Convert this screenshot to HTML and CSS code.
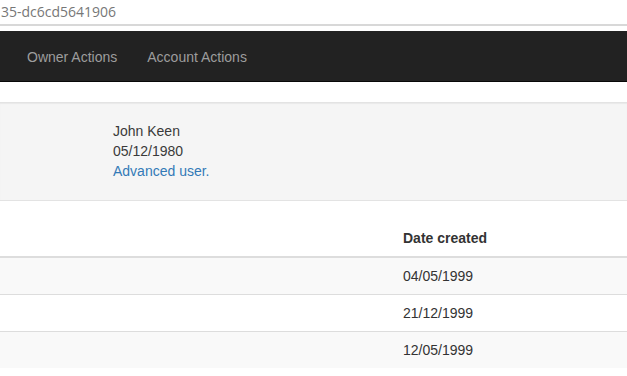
FILE: index.html
```html
<!DOCTYPE html>
<html>

<head>
    <title>Owner Details</title>
    <link rel="stylesheet" href="styles.css">
</head>

<body>
    <div class="address-bar">
        <span class="address-text">35-dc6cd5641906</span>
    </div>

    <nav class="navbar">
        <ul class="nav-links">
            <li><a href="#">Owner Actions</a></li>
            <li><a href="#">Account Actions</a></li>
        </ul>
    </nav>

    <div class="owner-well">
        <div class="owner-line">John Keen</div>
        <div class="owner-line">05/12/1980</div>
        <div class="owner-line owner-type">Advanced user.</div>
    </div>

    <table class="accounts-table">
        <thead>
            <tr>
                <th class="col-spacer"></th>
                <th>Date created</th>
            </tr>
        </thead>
        <tbody>
            <tr>
                <td></td>
                <td>04/05/1999</td>
            </tr>
            <tr>
                <td></td>
                <td>21/12/1999</td>
            </tr>
            <tr>
                <td></td>
                <td>12/05/1999</td>
            </tr>
        </tbody>
    </table>
</body>

</html>
```

FILE: styles.css
```css
body {
    margin: 0;
    padding: 0;
    background-color: #fff;
    color: #333;
    font-family: "Liberation Sans", Arial, sans-serif;
    font-size: 14px;
    line-height: 20px;
    overflow: hidden;
}

.address-bar {
    height: 24px;
    border-bottom: 2px solid #d8d8d8;
    margin-bottom: 5px;
    background-color: #fff;
}

.address-text {
    display: block;
    padding-left: 1px;
    font-family: "Open Sans", "DejaVu Sans", sans-serif;
    font-size: 14px;
    line-height: 24px;
    color: #777;
}

.navbar {
    height: 50px;
    background-color: #222;
    border-bottom: 1px solid #080808;
    margin-bottom: 20px;
}

.nav-links {
    display: flex;
    list-style: none;
    margin: 0;
    padding: 0 0 0 12px;
}

.nav-links a {
    display: block;
    padding: 16px 15px 14px;
    color: #9d9d9d;
    text-decoration: none;
}

.owner-well {
    background-color: #f5f5f5;
    border-top: 1px solid #e3e3e3;
    border-bottom: 1px solid #e3e3e3;
    box-shadow: inset 0 1px 1px rgba(0, 0, 0, 0.05);
    padding: 18px 0 19px 113px;
    margin-bottom: 19px;
}

.owner-line {
    color: #3a3a3a;
}

.owner-type {
    color: #337ab7;
}

.accounts-table {
    width: 100%;
    border-collapse: collapse;
    border-spacing: 0;
}

.accounts-table th,
.accounts-table td {
    padding: 8px;
    text-align: left;
    vertical-align: top;
}

.accounts-table th {
    font-weight: bold;
    border-bottom: 2px solid #ddd;
}

.accounts-table .col-spacer {
    width: 379px;
}

.accounts-table td {
    border-top: 1px solid #ddd;
}

.accounts-table tbody tr:nth-child(odd) {
    background-color: #f9f9f9;
}
```
